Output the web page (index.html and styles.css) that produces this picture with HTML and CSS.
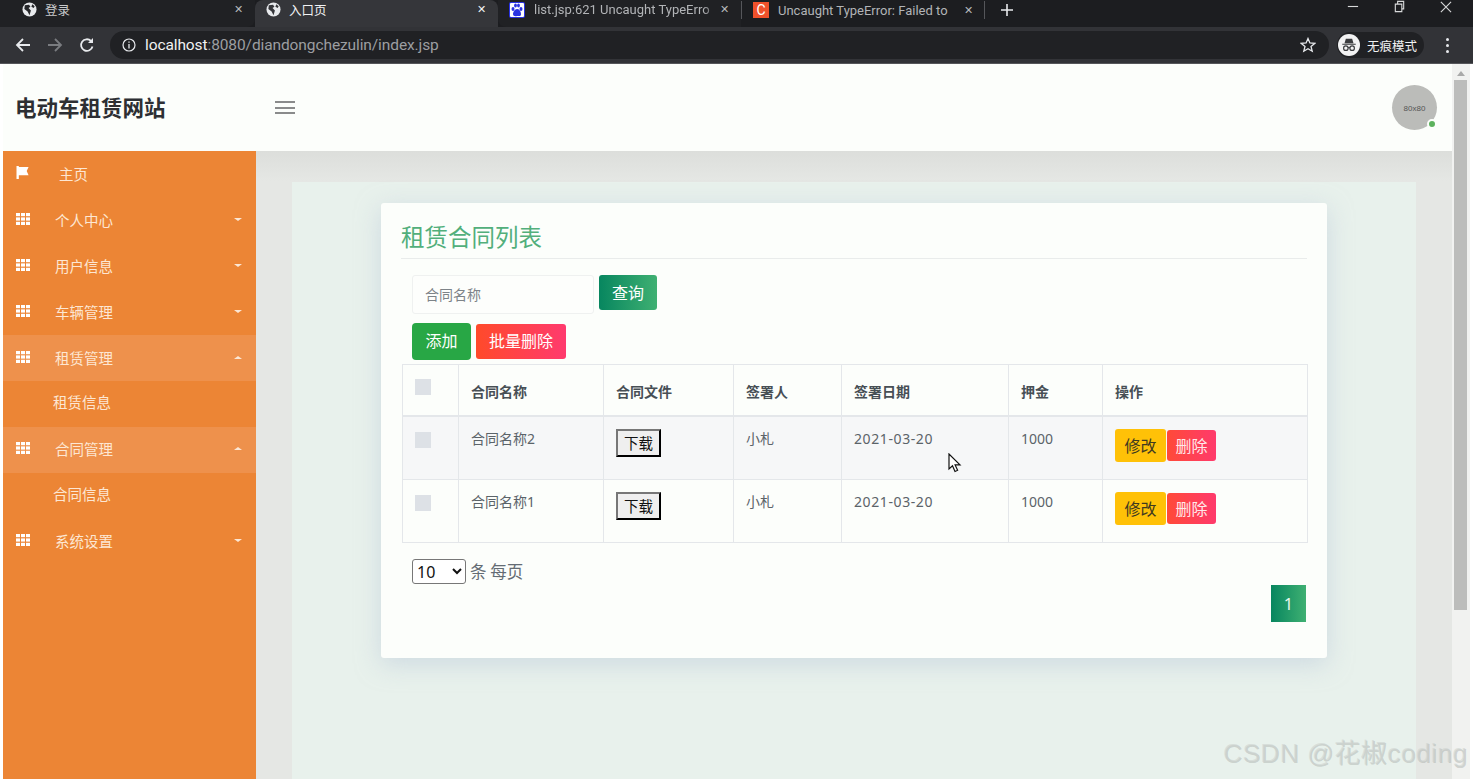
FILE: index.html
```html
<!DOCTYPE html>
<html lang="zh">
<head>
<meta charset="utf-8">
<title>电动车租赁网站</title>
<link rel="stylesheet" href="styles.css">
</head>
<body>
<div class="screen">
  <div class="browser">
    <div class="tabstrip">
      <div class="tab tab-first">
        <svg class="globe" viewBox="0 0 16 16"><circle cx="8" cy="8" r="7.5" fill="#e8eaed"/><path d="M3 3.5 7.5 3 9 5 7 6.5 9.5 9 8 14 6 10 2.5 7.5ZM11 2.5l2.500 2-1 2L10 5Z" fill="#26272a"/></svg>
        <span class="tab-title">登录</span><span class="tab-x">✕</span>
      </div>
      <div class="tab tab-active">
        <svg class="globe" viewBox="0 0 16 16"><circle cx="8" cy="8" r="7.5" fill="#e8eaed"/><path d="M3 3.5 7.5 3 9 5 7 6.5 9.5 9 8 14 6 10 2.5 7.5ZM11 2.5l2.500 2-1 2L10 5Z" fill="#35363a"/></svg>
        <span class="tab-title light">入口页</span><span class="tab-x light">✕</span>
      </div>
      <div class="tab tab-third">
        <svg class="favicon" viewBox="0 0 16 16"><rect width="16" height="16" rx="2" fill="#2932e1"/><rect x="1" y="1" width="14" height="14" rx="1" fill="#fff"/><ellipse cx="4" cy="7" rx="1.5" ry="2" fill="#2932e1"/><ellipse cx="6.5" cy="3.6" rx="1.4" ry="2" fill="#2932e1"/><ellipse cx="9.5" cy="3.6" rx="1.4" ry="2" fill="#2932e1"/><ellipse cx="12" cy="7" rx="1.5" ry="2" fill="#2932e1"/><path d="M8 7c-2 0-4 3-4 5s2 2.500 4 2 4 1 4-2-2-5-4-5Z" fill="#2932e1"/></svg>
        <span class="tab-title dim fade">list.jsp:621 Uncaught TypeErro</span><span class="tab-x">✕</span>
      </div>
      <div class="tab tab-fourth">
        <span class="csdn-icon">C</span>
        <span class="tab-title dim">Uncaught TypeError: Failed to</span><span class="tab-x">✕</span>
      </div>
      <svg class="new-tab" viewBox="0 0 14 14"><path d="M7 1v12M1 7h12" stroke="#e8eaed" stroke-width="1.600" fill="none"/></svg>
      <div class="window-controls">
        <svg viewBox="0 0 14 14"><path d="M2 7h11" stroke="#d8d9da" stroke-width="1.200"/></svg>
        <svg viewBox="0 0 14 14"><path d="M2.500 4.500h7v8h-7zM5 4.500V1.500h6.500v8h-2" stroke="#d8d9da" stroke-width="1.200" fill="none"/></svg>
        <svg viewBox="0 0 14 14"><path d="M2 2l11 11M13 2 2 13" stroke="#d8d9da" stroke-width="1.200"/></svg>
      </div>
    </div>
    <div class="toolbar">
      <svg class="nav-icon" viewBox="0 0 16 16"><path d="M15 8H2M8 2 2 8l6 6" stroke="#e8eaed" stroke-width="1.800" fill="none"/></svg>
      <svg class="nav-icon" viewBox="0 0 16 16"><path d="M1 8h13M8 2l6 6-6 6" stroke="#7a7c80" stroke-width="1.800" fill="none"/></svg>
      <svg class="nav-icon" viewBox="0 0 16 16"><path d="M13.500 9.500A5.800 5.800 0 1 1 12 4" stroke="#e8eaed" stroke-width="1.800" fill="none"/><path d="M14 1v5H9Z" fill="#e8eaed"/></svg>
      <div class="omnibox">
        <svg class="info" viewBox="0 0 14 14"><circle cx="7" cy="7" r="6" stroke="#e8eaed" stroke-width="1.200" fill="none"/><path d="M7 6v4.500M7 3.500v1.300" stroke="#e8eaed" stroke-width="1.300"/></svg>
        <span class="url"><span class="host">localhost</span>:8080/diandongchezulin/index.jsp</span>
        <svg class="star" viewBox="0 0 16 16"><path d="M8 1.500 9.900 6l4.800.4-3.700 3.100 1.200 4.700L8 11.700l-4.200 2.500L5 9.500 1.300 6.400 6.100 6Z" stroke="#e8eaed" stroke-width="1.300" fill="none"/></svg>
      </div>
      <div class="incognito">
        <span class="incognito-icon"><svg viewBox="0 0 20 20"><path d="M6.500 3h7l1.500 5H5ZM2.500 8.500h15v1.200h-15Z" fill="#3a3b3e"/><circle cx="6.500" cy="13.500" r="2.500" stroke="#3a3b3e" stroke-width="1.300" fill="none"/><circle cx="13.500" cy="13.500" r="2.500" stroke="#3a3b3e" stroke-width="1.300" fill="none"/><path d="M9 13h2" stroke="#3a3b3e" stroke-width="1.300"/></svg></span>
        <span class="incognito-label">无痕模式</span>
      </div>
      <div class="kebab"><i></i><i></i><i></i></div>
    </div>
  </div>

  <div class="viewport">
    <div class="app">
      <header class="topbar">
        <div class="brand">电动车租赁网站</div>
        <button class="burger" type="button"><i></i><i></i><i></i></button>
        <div class="avatar">80x80<span class="online"></span></div>
      </header>
      <div class="body-row">
        <nav class="sidebar">
          <a class="nav-item home">
            <svg class="nav-glyph" viewBox="0 0 14 14"><path d="M0 0h2.500v1H13l-2 4.500 2 4.500H2.500v4H0Z" fill="#fff"/></svg>
            <span class="nav-label">主页</span>
          </a>
          <a class="nav-item"><svg class="nav-glyph" viewBox="0 0 14 12"><use href="#grid"/></svg><span class="nav-label">个人中心</span><span class="caret"></span></a>
          <a class="nav-item"><svg class="nav-glyph" viewBox="0 0 14 12"><use href="#grid"/></svg><span class="nav-label">用户信息</span><span class="caret"></span></a>
          <a class="nav-item"><svg class="nav-glyph" viewBox="0 0 14 12"><use href="#grid"/></svg><span class="nav-label">车辆管理</span><span class="caret"></span></a>
          <a class="nav-item open"><svg class="nav-glyph" viewBox="0 0 14 12"><use href="#grid"/></svg><span class="nav-label">租赁管理</span><span class="caret up"></span></a>
          <a class="nav-sub">租赁信息</a>
          <a class="nav-item open"><svg class="nav-glyph" viewBox="0 0 14 12"><use href="#grid"/></svg><span class="nav-label">合同管理</span><span class="caret up"></span></a>
          <a class="nav-sub">合同信息</a>
          <a class="nav-item"><svg class="nav-glyph" viewBox="0 0 14 12"><use href="#grid"/></svg><span class="nav-label">系统设置</span><span class="caret"></span></a>
          <svg class="defs" width="0" height="0"><defs><g id="grid" fill="#fff"><rect x="0" y="0" width="4" height="3.200"/><rect x="5" y="0" width="4" height="3.200"/><rect x="10" y="0" width="4" height="3.200"/><rect x="0" y="4.400" width="4" height="3.200"/><rect x="5" y="4.400" width="4" height="3.200"/><rect x="10" y="4.400" width="4" height="3.200"/><rect x="0" y="8.800" width="4" height="3.200"/><rect x="5" y="8.800" width="4" height="3.200"/><rect x="10" y="8.800" width="4" height="3.200"/></g></defs></svg>
        </nav>
        <main class="content">
          <div class="panel">
            <section class="card">
              <h2 class="card-title">租赁合同列表</h2>
              <div class="search-row">
                <input class="search-input" type="text" placeholder="合同名称">
                <button class="btn btn-query" type="button">查询</button>
              </div>
              <div class="action-row">
                <button class="btn btn-add" type="button">添加</button>
                <button class="btn btn-batch" type="button">批量删除</button>
              </div>
              <table class="grid">
                <colgroup>
                  <col class="c1"><col class="c2"><col class="c3"><col class="c4"><col class="c5"><col class="c6"><col class="c7">
                </colgroup>
                <thead>
                  <tr><th><span class="check"></span></th><th>合同名称</th><th>合同文件</th><th>签署人</th><th>签署日期</th><th>押金</th><th>操作</th></tr>
                </thead>
                <tbody>
                  <tr class="striped">
                    <td><span class="check"></span></td><td>合同名称2</td><td><button class="download" type="button">下载</button></td><td>小札</td><td class="date">2021-03-20</td><td>1000</td>
                    <td><div class="ops"><button class="op op-edit" type="button">修改</button><button class="op op-del" type="button">删除</button></div></td>
                  </tr>
                  <tr>
                    <td><span class="check"></span></td><td>合同名称1</td><td><button class="download" type="button">下载</button></td><td>小札</td><td class="date">2021-03-20</td><td>1000</td>
                    <td><div class="ops"><button class="op op-edit" type="button">修改</button><button class="op op-del" type="button">删除</button></div></td>
                  </tr>
                </tbody>
              </table>
              <div class="page-size">
                <select class="size-select"><option>10</option><option>20</option></select>
                <span>条 每页</span>
              </div>
              <div class="pager"><a class="page-num">1</a></div>
            </section>
          </div>
        </main>
      </div>
    </div>
    <div class="scrollbar"><span class="arrow"></span><span class="thumb"></span></div>
  </div>

  <svg class="cursor" viewBox="0 0 14 20"><path d="M1 1v15l3.500-3.200L7 18.500l2.600-1.200-2.500-5.400H12Z" fill="#fff" stroke="#111" stroke-width="1.200"/></svg>
  <div class="watermark">CSDN @花椒coding</div>
</div>
</body>
</html>
```
FILE: styles.css
```css
* { box-sizing: border-box; }
html, body { margin: 0; padding: 0; height: 100%; overflow: hidden; background: #fff; }
body { font-family: "Noto Sans", "Noto Sans CJK SC", sans-serif; }
.screen { position: relative; width: 1473px; height: 779px; padding-left: 3px; overflow: hidden; background: #fff; display: flex; flex-direction: column; }

/* browser chrome */
.browser { height: 64px; margin-left: -3px; flex: none; display: flex; flex-direction: column; }
.tabstrip { height: 27px; background: #1c1d20; display: flex; align-items: flex-start; }
.tab { height: 27px; padding-bottom: 8px; display: flex; align-items: center; font-size: 12px; color: #c9cacc; font-family: "Roboto", "Noto Sans CJK SC", sans-serif; }
.tab-first { width: 255px; padding-left: 22px; padding-right: 11px; background: #202124; border-bottom-right-radius: 8px; }
.tab-active { width: 243px; padding-left: 11px; padding-right: 11px; background: #35363a; border-radius: 8px 8px 0 0; }
.tab-third { width: 243px; padding-left: 11px; padding-right: 11px; background: #202124; border-bottom-left-radius: 8px; }
.tab-fourth { width: 244px; height: 18px; padding-bottom: 0; margin-top: 1px; padding-left: 11px; padding-right: 10px; border-right: 1px solid #55565a; border-left: 1px solid #55565a; }
.globe { width: 15px; height: 15px; flex: none; margin-right: 8px; }
.favicon { width: 16px; height: 16px; flex: none; margin-right: 9px; }
.csdn-icon { width: 16px; height: 16px; flex: none; margin-right: 9px; background: #f0512b; color: #fff; font-size: 14px; line-height: 16px; text-align: center; }
.tab-title { flex: 1; min-width: 0; white-space: nowrap; overflow: hidden; font-size: 12.500px; }
.tab-title.light { color: #f1f2f3; }
.tab-title.dim { color: #b2b4b7; font-size: 13px; }
.tab-title.fade { -webkit-mask-image: linear-gradient(90deg, #000 92%, transparent); mask-image: linear-gradient(90deg, #000 92%, transparent); }
.tab-x { flex: none; width: 12px; text-align: center; font-size: 11px; color: #b8b9bb; }
.tab-x.light { color: #f1f2f3; }
.new-tab { width: 14px; height: 14px; margin-left: 15px; margin-top: 3px; flex: none; }
.window-controls { margin-left: auto; display: flex; gap: 33.500px; padding-right: 21px; }
.window-controls svg { width: 13px; height: 13px; }
.toolbar { height: 37px; background: #323337; border-bottom: 1px solid #55565a; display: flex; align-items: center; padding-left: 15px; }
.nav-icon { width: 16px; height: 16px; flex: none; margin-right: 16px; }
.omnibox { width: 1219px; height: 28px; background: #202124; border-radius: 14px; display: flex; align-items: center; padding: 0 13px 0 12px; color: #9c9ea1; font-size: 15.500px; font-family: "Roboto", sans-serif; flex: none; margin-left: -1px; }
.info { width: 14px; height: 14px; margin-right: 9px; flex: none; }
.url { flex: 1; letter-spacing: -0.1px; }
.host { color: #f1f2f3; }
.star { width: 16px; height: 16px; flex: none; }
.incognito { margin-left: 8px; width: 87px; height: 26px; background: #202124; border-radius: 13px; display: flex; align-items: center; padding-left: 1px; flex: none; }
.incognito-icon { width: 22px; height: 22px; border-radius: 50%; background: #f2f2f3; display: flex; align-items: center; justify-content: center; flex: none; }
.incognito-icon svg { width: 18px; height: 18px; }
.incognito-label { margin-left: 7px; font-size: 12.500px; color: #f1f2f3; font-family: "Noto Sans CJK SC", sans-serif; white-space: nowrap; }
.kebab { margin-left: 22px; display: flex; flex-direction: column; gap: 3px; flex: none; }
.kebab i { width: 3px; height: 3px; background: #e8eaed; border-radius: 50%; display: block; }

/* page viewport */
.viewport { flex: 1; min-height: 0; display: flex; }
.app { width: 1449px; display: flex; flex-direction: column; min-height: 0; }
.scrollbar { width: 18px; background: #f1f2f0; display: flex; flex-direction: column; align-items: center; }
.arrow { margin-top: 7px; margin-bottom: 4px; width: 0; height: 0; border: 4px solid transparent; border-top: 0; border-bottom: 5px solid #a9aaa9; }
.thumb { width: 13px; height: 530px; margin-right: 2px; background: #bcbdbb; }

.topbar { height: 87px; background: #fcfefb; display: flex; align-items: center; flex: none; }
.brand { width: 253px; padding: 0 0 2px 13px; font-size: 21.500px; font-weight: 700; color: #2d2f33; font-family: "Noto Sans CJK SC", sans-serif; margin-left: -1px; }
.burger { width: 20px; height: 13px; margin-left: 20px; padding: 0; border: 0; background: none; display: flex; flex-direction: column; justify-content: space-between; }
.burger i { display: block; height: 2px; background: #8a8b8b; }
.avatar { position: relative; margin-left: auto; margin-right: 15px; width: 45px; height: 45px; border-radius: 50%; background: #bbbcb9; color: #555; font-size: 8px; line-height: 47px; text-align: center; font-family: "Liberation Sans", sans-serif; }
.online { position: absolute; right: 0; bottom: 1px; width: 10px; height: 10px; border-radius: 50%; background: #5cb25d; border: 2px solid #fcfefb; }

.body-row { flex: 1; min-height: 0; display: flex; }
.sidebar { width: 253px; flex: none; background: #ec8535; display: flex; flex-direction: column; font-family: "Noto Sans CJK SC", sans-serif; }
.nav-item { height: 46px; flex: none; display: flex; align-items: center; padding: 0 14px 2px 13px; color: #fde7d3; font-size: 14.500px; }
.nav-item.open { background: #ee914c; }
.nav-glyph { width: 14px; height: 12px; flex: none; margin-top: -1px; }
.home .nav-glyph { height: 13px; margin-top: -1px; }
.nav-label { margin-left: 25px; flex: 1; }
.home .nav-label { margin-left: 29px; }
.caret { width: 0; height: 0; border: 4px solid transparent; border-bottom: 0; border-top: 3px solid #fbe7d5; }
.caret.up { border-top: 0; border-bottom: 3px solid #fbe7d5; }
.nav-sub { height: 45.500px; flex: none; display: flex; align-items: center; padding-left: 50px; color: #fde7d3; font-size: 14.500px; padding-bottom: 4px; }

.content { flex: 1; min-width: 0; padding: 31px 36px 0; background: linear-gradient(#dcdedb, #e5e7e4 30px); overflow: hidden; }
.panel { height: 100%; background: #e8f1ec; padding: 21px 89px 0; }
.card { height: 455px; background: #fcfefb; border-radius: 3px; box-shadow: 0 6px 24px rgba(180, 195, 215, 0.5); padding: 20px 20px 0; }
.card-title { margin: 0; height: 36px; font-size: 23.500px; line-height: 26px; font-weight: 400; color: #52af7b; border-bottom: 1px solid #e9eceb; font-family: "Noto Sans CJK SC", sans-serif; }
.search-row { display: flex; align-items: flex-start; padding: 16px 0 0 11px; height: 63px; gap: 5px; }
.search-input { width: 182px; height: 39px; border: 1px solid #eff1f0; border-radius: 3px; background: #fdfefc; padding: 0 12px 2px; font: 14px "Noto Sans CJK SC", sans-serif; outline: none; }
.search-input::placeholder { color: #7d8388; opacity: 1; }
.btn { border: 0; color: #fff; font: 16px "Noto Sans CJK SC", sans-serif; border-radius: 3px; padding: 0 0 2px; }
.btn-query { width: 58px; height: 35px; background: linear-gradient(90deg, #07865f, #3fb072); }
.action-row { display: flex; align-items: center; padding-left: 11px; height: 38px; margin-bottom: 4px; gap: 5px; }
.btn-add { width: 59px; height: 37px; background: #28a745; border-radius: 4px; }
.btn-batch { width: 90px; height: 35px; background: linear-gradient(90deg, #ff4a2a, #ff3a6e); }
.grid { width: 905px; margin-left: 1px; table-layout: fixed; border-collapse: collapse; font-size: 14px; color: #5b6369; font-family: "Noto Sans", "Noto Sans CJK SC", sans-serif; }
.c1 { width: 56px; } .c2 { width: 145px; } .c3 { width: 130px; } .c4 { width: 108px; } .c5 { width: 167px; } .c6 { width: 94px; } .c7 { width: 205px; }
.grid th, .grid td { border: 1px solid #e4e7ea; padding: 12px; vertical-align: top; text-align: left; }
.grid th { height: 51px; font-weight: 700; color: #474f55; border-bottom-width: 2px; vertical-align: middle; padding-top: 14px; }
.grid td { height: 63.500px; padding-top: 10px; line-height: 24px; }
.grid .striped td { background: #f6f7f8; }
.grid .date { letter-spacing: 0.6px; }
.check { display: block; width: 16px; height: 16px; background: #dde1e6; }
.grid th .check { margin-top: -7px; }
.grid td .check { margin-top: 5px; }
.download { display: block; width: 45px; height: 28px; margin-top: 2px; padding: 0 0 1px; font: 14.500px "Noto Sans CJK SC", sans-serif; color: #111; background: #efefef; border: 2px outset #555; border-color: #777 #333 #333 #777; }
.ops { display: flex; align-items: center; gap: 1px; margin-top: 2px; }
.op { border: 0; padding: 0 0 1px; font: 16px "Noto Sans CJK SC", sans-serif; border-radius: 3px; }
.op-edit { width: 51px; height: 33px; background: #ffc107; color: #3f3a20; }
.op-del { width: 49px; height: 31px; background: linear-gradient(90deg, #ff4a38, #ff3a6c); color: #ffe9ea; }
.page-size { display: flex; align-items: center; gap: 4px; padding: 15px 0 0 11px; height: 41px; font-size: 16.500px; color: #646c74; font-family: "Noto Sans CJK SC", sans-serif; }
.size-select { width: 54px; height: 25px; font: 16px "Noto Sans", sans-serif; color: #111; background: #fff; border: 1px solid #777; border-radius: 3px; }
.pager { display: flex; justify-content: flex-end; padding: 0 1px 0 0; margin-top: 1px; }
.page-num { width: 35px; height: 37px; line-height: 37px; text-align: center; color: #e9f7ee; font-size: 16.500px; background: linear-gradient(90deg, #07865f, #3fb072); }

/* overlays */
.cursor { position: absolute; left: 948px; top: 453px; width: 14px; height: 20px; }
.watermark { position: absolute; left: 1223px; top: 735px; font-size: 26px; line-height: 36px; white-space: nowrap; color: rgba(205, 210, 207, 0.6); text-shadow: 1px 1px 0 rgba(130, 135, 132, 0.3); font-family: "Liberation Sans", "Noto Sans CJK SC", sans-serif; letter-spacing: 0.6px; }
```
